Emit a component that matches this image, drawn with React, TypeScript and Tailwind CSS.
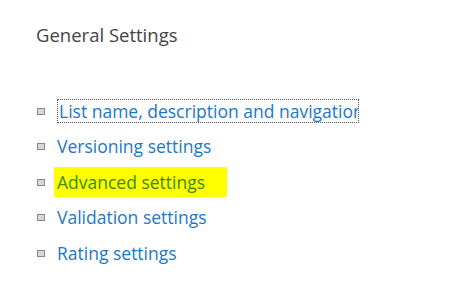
import React from "react";

const items = [
  { label: "List name, description and navigation", focus: true },
  { label: "Versioning settings" },
  { label: "Advanced settings", mark: true },
  { label: "Validation settings" },
  { label: "Rating settings" },
];

function Bullet() {
  return (
    <span className="w-[8px] h-[7px] border border-[#8a8a8a] bg-[#d8d8d8] shrink-0 mr-[12px]" />
  );
}

export default function App() {
  return (
    <div className="w-[459px] h-[281px] bg-white overflow-hidden font-['Open_Sans',sans-serif]">
      <div className="pl-[36px] pt-[22px] text-[18.5px] text-[#444] leading-[26px]">General Settings</div>
      <ul className="mt-[52px] pl-[37px] flex flex-col gap-[13.5px]">
        {items.map((it) => (
          <li key={it.label} className="flex items-center h-[22px]">
            <Bullet />
            {it.focus ? (
              <span className="border border-dotted border-[#555] w-[302px] overflow-hidden whitespace-nowrap text-[17.5px] text-[#1a78c8] px-[1px] leading-[22px]">
                {it.label}
              </span>
            ) : it.mark ? (
              <span className="bg-[#ffff00] -ml-[3px] pl-[3px] pr-[22px] py-[3px] -my-[3px] text-[17.5px] leading-[24px] text-[#3a8a00]">
                {it.label}
              </span>
            ) : (
              <span className="text-[17.5px] text-[#1a78c8]">{it.label}</span>
            )}
          </li>
        ))}
      </ul>
    </div>
  );
}
